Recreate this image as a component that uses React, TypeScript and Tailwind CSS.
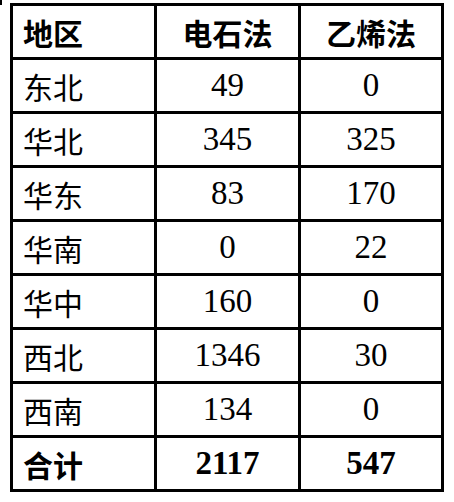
const rows: [string, string, string][] = [
  ["东北", "49", "0"],
  ["华北", "345", "325"],
  ["华东", "83", "170"],
  ["华南", "0", "22"],
  ["华中", "160", "0"],
  ["西北", "1346", "30"],
  ["西南", "134", "0"],
]

const cjk = "font-['Noto_Sans_CJK_SC',sans-serif] text-[30px]"
const num = "font-['Liberation_Serif','Noto_Sans_CJK_SC',serif] text-[33px]"

function Cell({ children, left, bold, digits }: { children: string; left?: boolean; bold?: boolean; digits?: boolean }) {
  return (
    <div
      className={`flex h-[51px] items-center bg-white leading-none text-black ${
        left ? "justify-start pl-[10px]" : "justify-center"
      } ${bold ? "font-bold" : "font-normal"} ${digits ? num : cjk}`}
    >
      {children}
    </div>
  )
}

export default function App() {
  return (
    <div className="relative h-[502px] w-[454px] bg-white">
      <div className="absolute left-0 top-0 h-[5px] w-[2px] bg-black" />
      <div className="pl-[10px] pt-[3px]">
        <div className="grid w-fit grid-cols-[141px_141px_140px] gap-[3px] bg-black p-[3px]">
          <Cell left bold>地区</Cell>
          <Cell bold>电石法</Cell>
          <Cell bold>乙烯法</Cell>
          {rows.map(([region, a, b]) => (
            <div key={region} className="contents">
              <Cell left>{region}</Cell>
              <Cell digits>{a}</Cell>
              <Cell digits>{b}</Cell>
            </div>
          ))}
          <Cell left bold>合计</Cell>
          <Cell digits bold>2117</Cell>
          <Cell digits bold>547</Cell>
        </div>
      </div>
    </div>
  )
}
